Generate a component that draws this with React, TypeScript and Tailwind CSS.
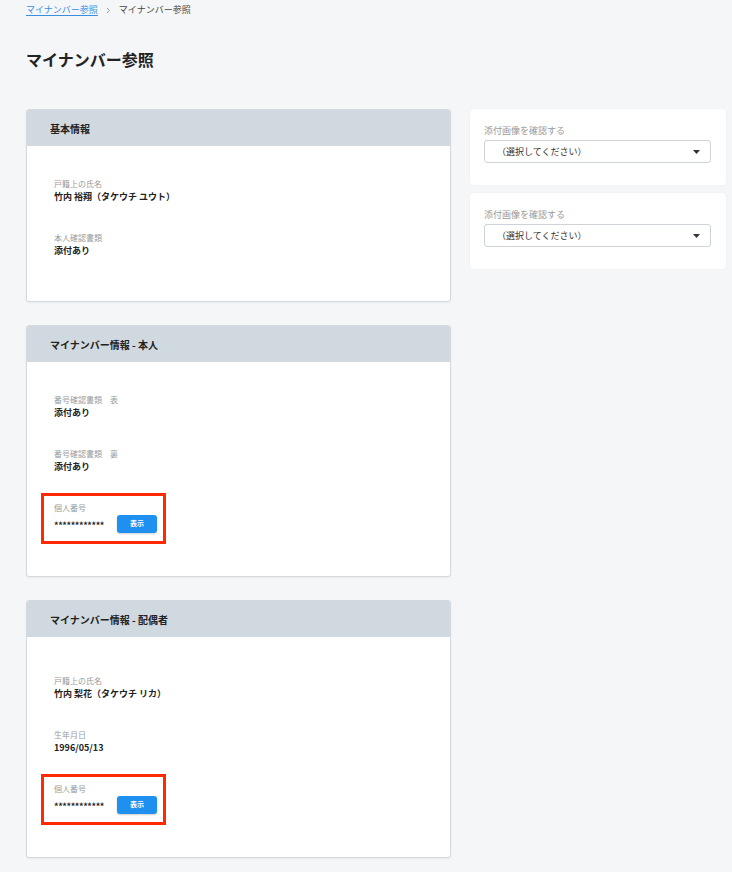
import React from "react";

type Field = {
  label: string;
  value: string;
  secret?: boolean;
};

const Secret = () => (
  <div className="relative">
    <div className="text-[8px] leading-[12px] text-[#9a9a9a]">個人番号</div>
    <div className="flex h-[19px] items-center">
      <span className="w-[63px] pt-[3px] text-[9px] font-bold leading-none tracking-[-0.4px] text-[#222]">
        ************
      </span>
      <button className="h-[18px] w-[40px] rounded-[3px] bg-[#1f8ff0] text-[7px] font-bold text-white shadow-[0_1px_2px_rgba(0,0,0,0.2)]">
        表示
      </button>
    </div>
    {/* highlight annotation */}
    <div className="pointer-events-none absolute -left-[13px] -top-[9px] h-[51px] w-[125px] border-[3px] border-[#ff2a00]" />
  </div>
);

const InfoCard = ({
  title,
  fields,
  padTop = "pt-[32px]",
}: {
  title: string;
  fields: Field[];
  padTop?: string;
}) => (
  <div className="overflow-hidden rounded-[3px] border border-[#d3d9df] bg-white shadow-[0_1px_2px_rgba(0,0,0,0.05)]">
    <div className="flex h-[36px] items-center bg-[#d1d9e0] pl-[23px] text-[10px] font-bold text-[#222]">
      {title}
    </div>
    <div className={`flex flex-col gap-[28px] px-[27px] pb-[43px] ${padTop}`}>
      {fields.map((f) =>
        f.secret ? (
          <Secret key={f.label} />
        ) : (
          <div key={f.label}>
            <div className="text-[8px] leading-[12px] text-[#9a9a9a]">{f.label}</div>
            <div className="text-[9px] font-bold leading-[14px] text-[#222]">{f.value}</div>
          </div>
        )
      )}
    </div>
  </div>
);

const ImageSelect = () => (
  <div className="rounded-[4px] bg-white pb-[22px] pl-[14px] pr-[15px] pt-[16px] shadow-[0_0_2px_rgba(0,0,0,0.06)]">
    <div className="text-[9px] leading-[12px] text-[#9a9a9a]">添付画像を確認する</div>
    <div className="mt-[3px] flex h-[23px] items-center justify-between rounded-[3px] border border-[#cdd3d9] bg-white pl-[12px] pr-[10px]">
      <span className="text-[9px] text-[#333]">（選択してください）</span>
      <svg width="7" height="4" viewBox="0 0 7 4">
        <path d="M0 0h7L3.5 4z" fill="#333" />
      </svg>
    </div>
  </div>
);

export default function App() {
  return (
    <div
      className="min-h-[872px] bg-[#f5f6f8] pb-[20px] pl-[26px] pr-[6px]"
      style={{ fontFamily: '"Noto Sans CJK JP", "Noto Sans", sans-serif' }}
    >
      <div className="flex items-center pt-[4px] text-[9px] leading-[12px]">
        <a className="text-[#3a8ee0] underline underline-offset-2">マイナンバー参照</a>
        <svg className="mx-[8px]" width="5" height="7" viewBox="0 0 5 7">
          <path d="M1 1l2.5 2.5L1 6" fill="none" stroke="#999" strokeWidth="1" />
        </svg>
        <span className="text-[#444]">マイナンバー参照</span>
      </div>

      <h1 className="mt-[32px] text-[16px] font-bold leading-[22px] text-[#222]">マイナンバー参照</h1>

      <div className="mt-[39px] flex gap-[19px]">
        <div className="flex w-[425px] shrink-0 flex-col gap-[23px]">
          <InfoCard
            title="基本情報"
            fields={[
              { label: "戸籍上の氏名", value: "竹内 裕翔（タケウチ ユウト）" },
              { label: "本人確認書類", value: "添付あり" },
            ]}
          />
          <InfoCard
            title="マイナンバー情報 - 本人"
            fields={[
              { label: "番号確認書類　表", value: "添付あり" },
              { label: "番号確認書類　裏", value: "添付あり" },
              { label: "個人番号", value: "", secret: true },
            ]}
          />
          <InfoCard
            title="マイナンバー情報 - 配偶者"
            padTop="pt-[38px]"
            fields={[
              { label: "戸籍上の氏名", value: "竹内 梨花（タケウチ リカ）" },
              { label: "生年月日", value: "1996/05/13" },
              { label: "個人番号", value: "", secret: true },
            ]}
          />
        </div>
        <div className="flex w-[256px] shrink-0 flex-col gap-[8px]">
          <ImageSelect />
          <ImageSelect />
        </div>
      </div>
    </div>
  );
}
